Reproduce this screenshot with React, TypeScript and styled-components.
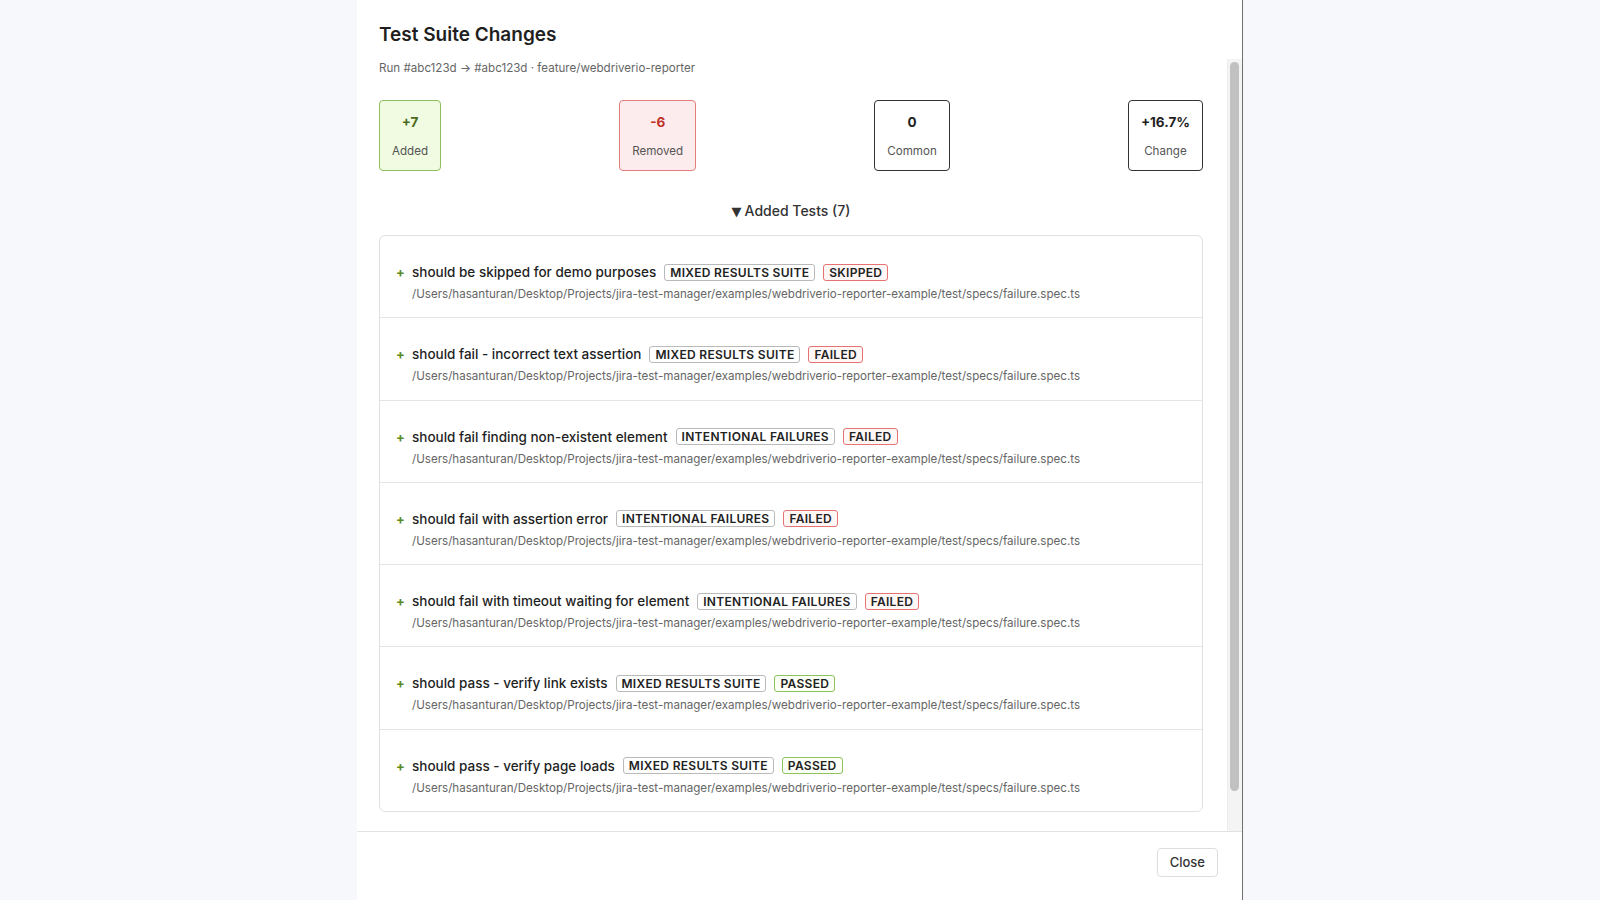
import React from "react";
import styled, { createGlobalStyle, css } from "styled-components";

const GlobalStyle = createGlobalStyle`
  html, body { margin: 0; padding: 0; }
  body {
    background: #f7f8fb;
    font-family: Inter, "Noto Sans", "DejaVu Sans", sans-serif;
    color: #1f1f1f;
  }
  * { box-sizing: border-box; }
`;

const Page = styled.div`
  height: 100vh;
  display: flex;
  justify-content: center;
  overflow: hidden;
`;

const Modal = styled.div`
  width: 886px;
  height: 100vh;
  background: #ffffff;
  border-right: 1px solid #6f6f6f;
  display: flex;
  flex-direction: column;
`;

const Header = styled.div`
  padding: 23px 24px 12px 22px;
`;

const Title = styled.h2`
  margin: 0;
  font-size: 19px;
  line-height: 24px;
  font-weight: 600;
  color: #1f1f1f;
`;

const Body = styled.div`
  flex: 1;
  min-height: 0;
  display: flex;
`;

const ScrollArea = styled.div`
  flex: 1;
  min-width: 0;
  overflow: hidden;
  padding: 1px 24px 59px 22px;
`;

const ScrollTrack = styled.div`
  width: 15px;
  flex: none;
  background: #f4f4f4;
  border-left: 1px solid #ededed;
  padding: 3px 3px 0 2px;
`;

const ScrollThumb = styled.div`
  height: 729px;
  border-radius: 5px;
  background: #c1c1c1;
`;

const Subtitle = styled.div`
  font-size: 11.6px;
  line-height: 16px;
  color: #666666;
`;

const Stats = styled.div`
  display: flex;
  justify-content: space-between;
  margin-top: 24px;
`;

type Tone = "added" | "removed" | "neutral";

const StatCard = styled.div<{ $tone: Tone }>`
  border: 1px solid #333333;
  border-radius: 4px;
  padding: 12px 12px 11px;
  text-align: center;
  background: #ffffff;
  ${(p) =>
    p.$tone === "added" &&
    css`
      background: #f0fbe1;
      border-color: #8dbf5e;
    `}
  ${(p) =>
    p.$tone === "removed" &&
    css`
      background: #fdeced;
      border-color: #e57c7c;
    `}
`;

const StatValue = styled.div<{ $tone: Tone }>`
  font-size: 13.5px;
  line-height: 18px;
  font-weight: 700;
  color: ${(p) =>
    p.$tone === "added" ? "#4a6b1c" : p.$tone === "removed" ? "#c0312b" : "#1f1f1f"};
`;

const StatLabel = styled.div`
  margin-top: 12px;
  font-size: 11.6px;
  line-height: 16px;
  color: #555555;
`;

const SectionHeading = styled.div`
  margin: 30px 0 13px;
  text-align: center;
  font-size: 14px;
  line-height: 20px;
  font-weight: 500;
  color: #333333;
`;

const Caret = styled.span`
  font-family: "DejaVu Sans", sans-serif;
  font-size: 13px;
  margin-right: 3px;
`;

const List = styled.div`
  border: 1px solid #e1e1e1;
  border-radius: 6px;
  overflow: hidden;
`;

const Row = styled.div`
  display: grid;
  grid-template-columns: 16px 1fr;
  padding: 26px 16px 16.3px;
  & + & {
    border-top: 1px solid #e5e5e5;
  }
`;

const Plus = styled.span`
  font-size: 13px;
  line-height: 20px;
  font-weight: 700;
  color: #5b8a1e;
`;

const Content = styled.div`
  display: flex;
  flex-direction: column;
  min-width: 0;
`;

const TitleLine = styled.div`
  display: flex;
  align-items: center;
  gap: 8px;
  min-height: 20px;
`;

const TestName = styled.span`
  font-size: 13.5px;
  line-height: 20px;
  font-weight: 500;
  color: #1f1f1f;
`;

type Status = "SKIPPED" | "FAILED" | "PASSED";

const Badge = styled.span<{ $status?: Status }>`
  display: inline-flex;
  align-items: center;
  height: 17px;
  padding: 0 5px;
  border: 1px solid #b9b9b9;
  border-radius: 3px;
  background: #ffffff;
  font-size: 12px;
  line-height: 15px;
  font-weight: 600;
  letter-spacing: 0.3px;
  color: #222222;
  ${(p) =>
    (p.$status === "SKIPPED" || p.$status === "FAILED") &&
    css`
      border-color: #e57373;
      background: #fff6f6;
    `}
  ${(p) =>
    p.$status === "PASSED" &&
    css`
      border-color: #8cc35c;
      background: #fbfff5;
    `}
`;

const Path = styled.div`
  margin-top: 5px;
  font-size: 11.6px;
  line-height: 14px;
  color: #666666;
  white-space: nowrap;
`;

const Footer = styled.div`
  border-top: 1px solid #e2e2e2;
  padding: 16px 24px 23px;
  display: flex;
  justify-content: flex-end;
`;

const CloseButton = styled.button`
  font-family: inherit;
  font-size: 13px;
  line-height: 17px;
  font-weight: 500;
  color: #333333;
  background: #ffffff;
  border: 1px solid #dddddd;
  border-radius: 4px;
  padding: 5px 12px;
  cursor: pointer;
`;

const PATH =
  "/Users/hasanturan/Desktop/Projects/jira-test-manager/examples/webdriverio-reporter-example/test/specs/failure.spec.ts";

const stats: { value: string; label: string; tone: Tone }[] = [
  { value: "+7", label: "Added", tone: "added" },
  { value: "-6", label: "Removed", tone: "removed" },
  { value: "0", label: "Common", tone: "neutral" },
  { value: "+16.7%", label: "Change", tone: "neutral" },
];

const tests: { name: string; suite: string; status: Status }[] = [
  { name: "should be skipped for demo purposes", suite: "MIXED RESULTS SUITE", status: "SKIPPED" },
  { name: "should fail - incorrect text assertion", suite: "MIXED RESULTS SUITE", status: "FAILED" },
  { name: "should fail finding non-existent element", suite: "INTENTIONAL FAILURES", status: "FAILED" },
  { name: "should fail with assertion error", suite: "INTENTIONAL FAILURES", status: "FAILED" },
  { name: "should fail with timeout waiting for element", suite: "INTENTIONAL FAILURES", status: "FAILED" },
  { name: "should pass - verify link exists", suite: "MIXED RESULTS SUITE", status: "PASSED" },
  { name: "should pass - verify page loads", suite: "MIXED RESULTS SUITE", status: "PASSED" },
];

export default function App() {
  return (
    <>
      <GlobalStyle />
      <Page>
        <Modal>
          <Header>
            <Title>Test Suite Changes</Title>
          </Header>
          <Body>
            <ScrollArea>
              <Subtitle>Run #abc123d → #abc123d · feature/webdriverio-reporter</Subtitle>
              <Stats>
                {stats.map((s) => (
                  <StatCard key={s.label} $tone={s.tone}>
                    <StatValue $tone={s.tone}>{s.value}</StatValue>
                    <StatLabel>{s.label}</StatLabel>
                  </StatCard>
                ))}
              </Stats>
              <SectionHeading>
                <Caret>▼</Caret>Added Tests (7)
              </SectionHeading>
              <List>
                {tests.map((t) => (
                  <Row key={t.name}>
                    <Plus>+</Plus>
                    <Content>
                      <TitleLine>
                        <TestName>{t.name}</TestName>
                        <Badge>{t.suite}</Badge>
                        <Badge $status={t.status}>{t.status}</Badge>
                      </TitleLine>
                      <Path>{PATH}</Path>
                    </Content>
                  </Row>
                ))}
              </List>
            </ScrollArea>
            <ScrollTrack>
              <ScrollThumb />
            </ScrollTrack>
          </Body>
          <Footer>
            <CloseButton>Close</CloseButton>
          </Footer>
        </Modal>
      </Page>
    </>
  );
}
